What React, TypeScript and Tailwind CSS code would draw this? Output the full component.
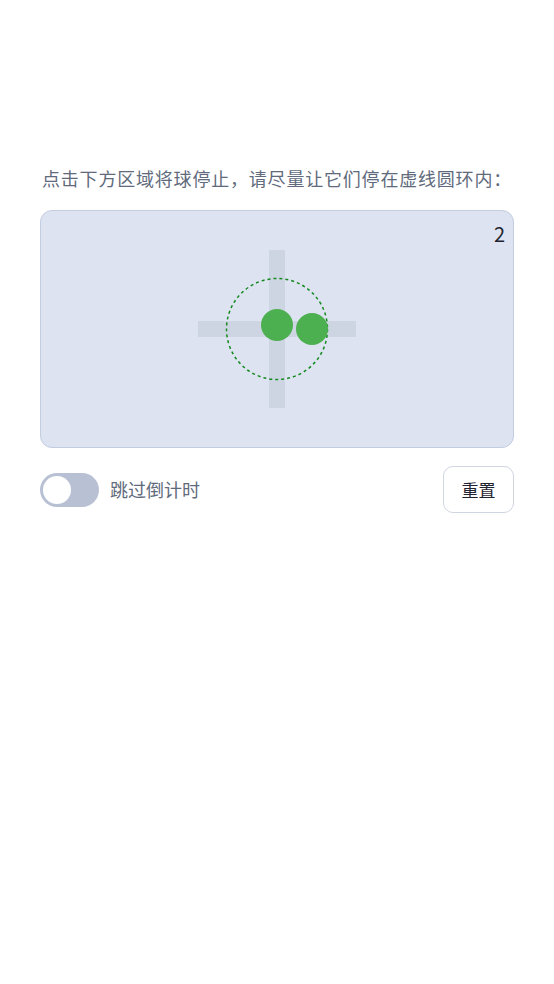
import React from 'react';

export default function App() {
  return (
    <div
      className="min-h-[984px] w-full bg-white px-10 pt-[166px]"
      style={{ fontFamily: '"Noto Sans CJK SC", "Noto Sans", sans-serif' }}
    >
      <p className="text-center text-[18px] leading-6 tracking-[0.8px] text-[#5f6b7c]">
        点击下方区域将球停止，请尽量让它们停在虚线圆环内：
      </p>
      <div className="relative mt-5 flex h-[238px] w-full items-center justify-center rounded-xl border border-[#c3cde0] bg-[#dde3f0]">
        <span className="absolute right-[8px] top-[11px] text-[20px] leading-6 text-[#1f2430]">2</span>
        {/* target + balls on the play canvas */}
        <div className="relative h-[158px] w-[158px]">
          <div className="absolute left-[71px] top-0 h-[158px] w-4 bg-[#ced5e2]" />
          <div className="absolute left-0 top-[71px] h-4 w-[158px] bg-[#ced5e2]" />
          <svg className="absolute inset-0" width="158" height="158" viewBox="0 0 158 158">
            <circle cx="79" cy="79" r="50.5" fill="none" stroke="#138a1f" strokeWidth="1.5" strokeDasharray="3 3" />
          </svg>
          <div className="absolute left-[63px] top-[59px] h-8 w-8 rounded-full bg-[#4caf50]" />
          <div className="absolute left-[98px] top-[63px] h-8 w-8 rounded-full bg-[#4caf50]" />
        </div>
      </div>
      <div className="mt-[18px] flex items-center justify-between">
        <div className="flex items-center gap-[11px]">
          <div className="flex h-[34px] w-[59px] items-center rounded-full bg-[#b8c0d4] p-[3px]">
            <div className="h-7 w-7 rounded-full bg-white" />
          </div>
          <span className="text-[18px] text-[#5f6b7c]">跳过倒计时</span>
        </div>
        <button className="h-[47px] w-[71px] rounded-[10px] border border-[#d0d5e0] bg-white text-[17px] text-[#1f2430]">
          重置
        </button>
      </div>
    </div>
  );
}
